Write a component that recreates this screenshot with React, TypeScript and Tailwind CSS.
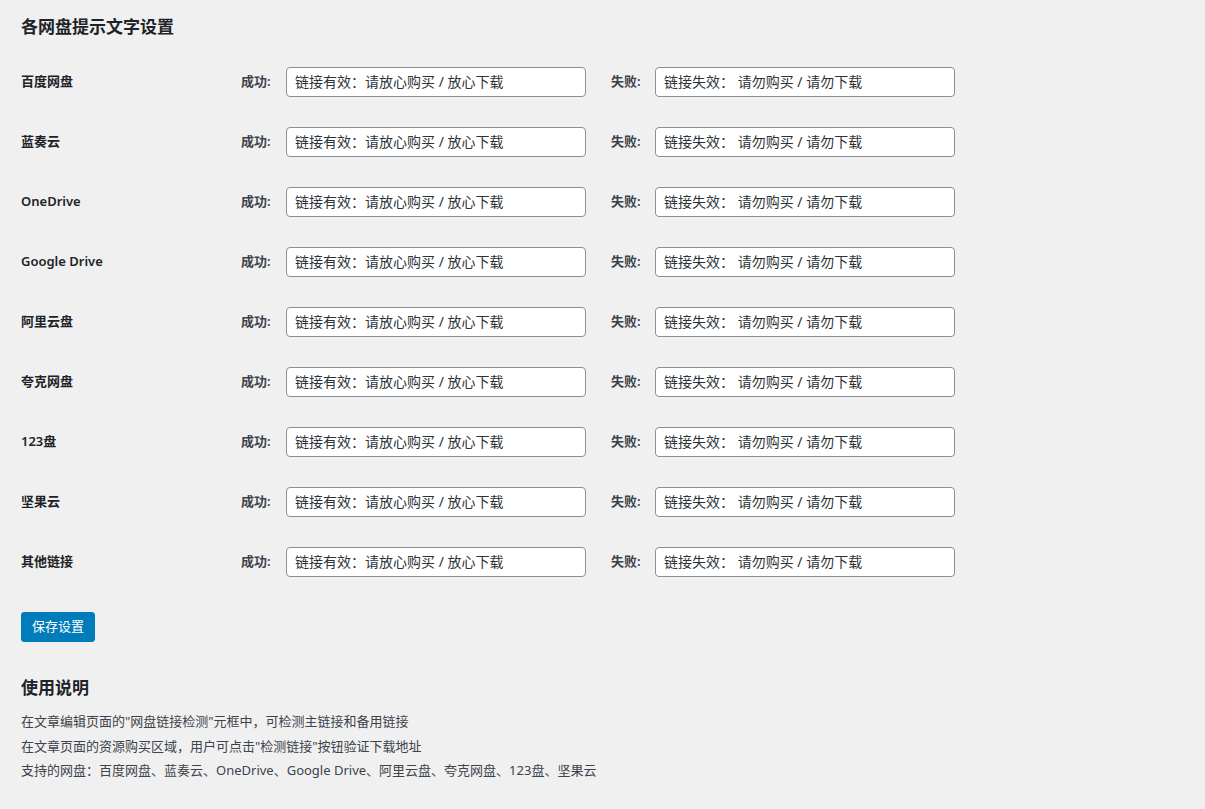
import React from 'react';

const DISKS = [
  '百度网盘',
  '蓝奏云',
  'OneDrive',
  'Google Drive',
  '阿里云盘',
  '夸克网盘',
  '123盘',
  '坚果云',
  '其他链接',
];

const font = '[font-family:"Noto_Sans","Noto_Sans_CJK_SC",sans-serif]';

const DiskRow = ({ name }: { name: string }) => (
  <div className="flex items-center h-[60px]">
    <div className="w-[220px] text-[13px] font-semibold text-[#1d2327]">{name}</div>
    <span className="text-[13px] font-semibold text-[#3c434a] w-[45px]">成功:</span>
    <input
      defaultValue="链接有效：请放心购买 / 放心下载"
      className={`w-[300px] h-[30px] px-2 pb-[2px] bg-white border border-[#8c8f94] rounded-[4px] text-[14px] text-[#2c3338] outline-none ${font}`}
    />
    <span className="ml-[25px] text-[13px] font-semibold text-[#3c434a] w-[44px]">失败:</span>
    <input
      defaultValue="链接失效： 请勿购买 / 请勿下载"
      className={`w-[300px] h-[30px] px-2 pb-[2px] bg-white border border-[#8c8f94] rounded-[4px] text-[14px] text-[#2c3338] outline-none ${font}`}
    />
  </div>
);

export default function App() {
  return (
    <div className={`min-h-[809px] bg-[#f0f0f1] text-[#1d2327] pl-[21px] pt-[16px] ${font}`}>
      <h2 className="text-[17px] leading-[22px] font-semibold">各网盘提示文字设置</h2>
      <div className="mt-[14px]">
        {DISKS.map((d) => (
          <DiskRow key={d} name={d} />
        ))}
      </div>
      <button className="mt-[20px] h-[30px] px-[10px] bg-[#007cba] text-white text-[13px] rounded-[3px] border border-[#007cba]">
        保存设置
      </button>
      <h2 className="mt-[35px] text-[17px] leading-[22px] font-semibold">使用说明</h2>
      <div className="mt-[10px] text-[13px] leading-[24.5px] text-[#3c434a]">
        <p>在文章编辑页面的"网盘链接检测"元框中，可检测主链接和备用链接</p>
        <p>在文章页面的资源购买区域，用户可点击"检测链接"按钮验证下载地址</p>
        <p>支持的网盘：百度网盘、蓝奏云、OneDrive、Google Drive、阿里云盘、夸克网盘、123盘、坚果云</p>
      </div>
    </div>
  );
}
